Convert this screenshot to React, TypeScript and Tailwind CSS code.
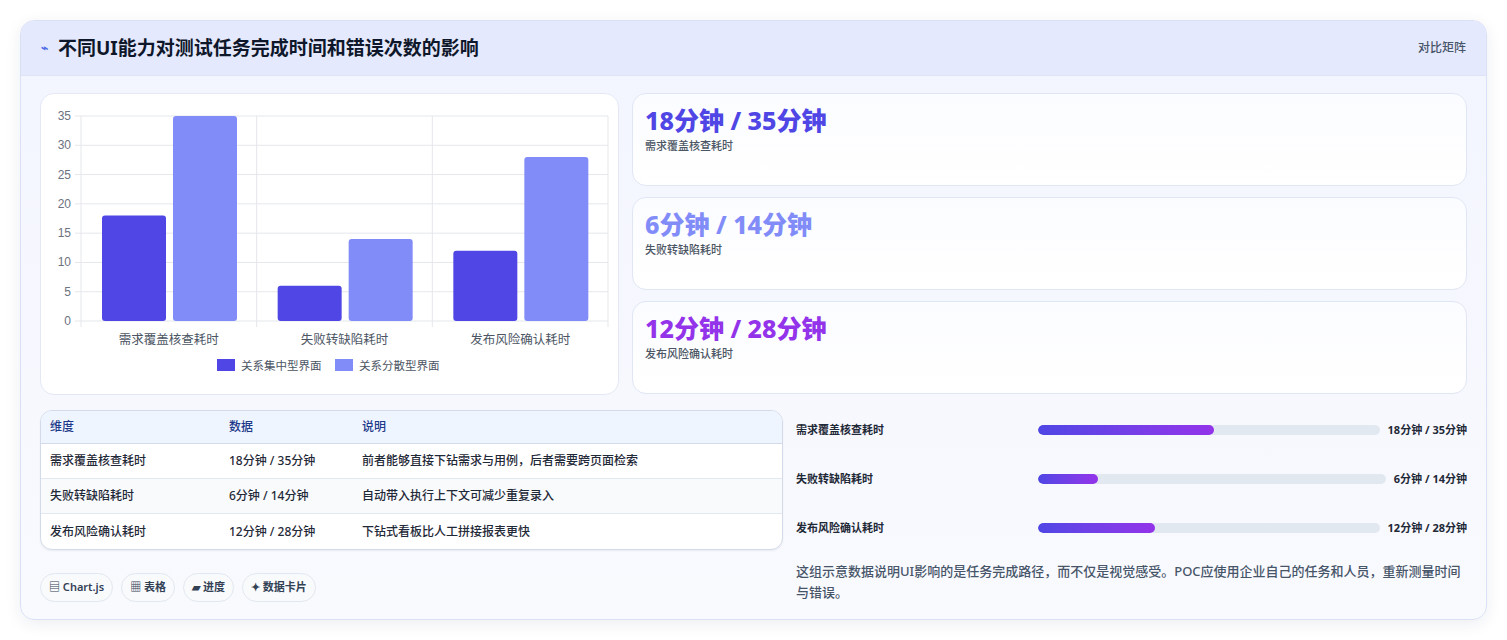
import React from "react";

const F = { fontFamily: '"Noto Sans", "Noto Sans CJK SC", sans-serif' };

function Chart() {
  const top = 22, bottom = 227, left = 40, right = 567;
  const s = (bottom - top) / 35;
  const gw = (right - left) / 3;
  const data = [[18, 35, "需求覆盖核查耗时"], [6, 14, "失败转缺陷耗时"], [12, 28, "发布风险确认耗时"]] as const;
  return (
    <svg width="578" height="300" className="block">
      {[0, 5, 10, 15, 20, 25, 30, 35].map((v) => (
        <g key={v}>
          <line x1={left - 6} x2={right} y1={bottom - v * s} y2={bottom - v * s} stroke="#e5e7eb" />
          <text x={30} y={bottom - v * s + 4} textAnchor="end" fontSize="12" fill="#6b7280" fontFamily="Liberation Sans, sans-serif">{v}</text>
        </g>
      ))}
      {[0, 1, 2, 3].map((i) => (
        <line key={i} x1={left + i * gw} x2={left + i * gw} y1={top} y2={bottom + 6} stroke="#e5e7eb" />
      ))}
      {data.map(([a, b, l], i) => {
        const x0 = left + i * gw + 21;
        return (
          <g key={i}>
            <rect x={x0} y={bottom - a * s} width={64} height={a * s} fill="#4f46e5" rx="3" />
            <rect x={x0 + 71} y={bottom - b * s} width={64} height={b * s} fill="#818cf8" rx="3" />
            <text x={left + i * gw + gw / 2} y={250} textAnchor="middle" fontSize="12.5" fill="#4b5563" fontFamily="Noto Sans CJK SC, sans-serif">{l}</text>
          </g>
        );
      })}
      <rect x={176} y={265} width={18} height={12} fill="#4f46e5" />
      <text x={200} y={276} fontSize="11.5" fill="#4b5563" fontFamily="Noto Sans CJK SC, sans-serif">关系集中型界面</text>
      <rect x={294} y={265} width={18} height={12} fill="#818cf8" />
      <text x={318} y={276} fontSize="11.5" fill="#4b5563" fontFamily="Noto Sans CJK SC, sans-serif">关系分散型界面</text>
    </svg>
  );
}

const rows = [
  ["需求覆盖核查耗时", "18分钟 / 35分钟", "前者能够直接下钻需求与用例，后者需要跨页面检索", 18],
  ["失败转缺陷耗时", "6分钟 / 14分钟", "自动带入执行上下文可减少重复录入", 6],
  ["发布风险确认耗时", "12分钟 / 28分钟", "下钻式看板比人工拼接报表更快", 12],
] as const;

export default function App() {
  return (
    <div style={F} className="w-[1507px] h-[640px] bg-white pt-[20px] px-[20px]">
      <div className="w-[1467px] h-[600px] rounded-[14px] border border-[#dbe1f5] bg-gradient-to-b from-[#f3f5ff] to-[#f9fafe] shadow-[0_4px_16px_rgba(30,41,90,0.08)] overflow-hidden">
        <div className="h-[55px] bg-[#e5e9fd] border-b border-[#dfe3f6] flex items-center justify-between px-[20px]">
          <div className="flex items-center gap-[10px]">
            <span className="text-[#4f6ee5] text-[12px] font-bold">⌁</span>
            <span className="text-[19px] font-bold text-[#0f172a]">不同UI能力对测试任务完成时间和错误次数的影响</span>
          </div>
          <span className="text-[12px] font-medium text-[#475569]">对比矩阵</span>
        </div>
        <div className="px-[19px] pt-[17px]">
          <div className="flex gap-[13px]">
            <div className="w-[579px] h-[302px] bg-white rounded-[14px] border border-[#e3e8f4]"><Chart /></div>
            <div className="flex-1 flex flex-col gap-[11px]">
              {[["18分钟 / 35分钟", "需求覆盖核查耗时", "text-[#4f46e5]"], ["6分钟 / 14分钟", "失败转缺陷耗时", "text-[#818cf8]"], ["12分钟 / 28分钟", "发布风险确认耗时", "text-[#9333ea]"]].map(([v, l, c]) => (
                <div key={l} className="h-[93px] rounded-[14px] border border-[#e0e6f4] bg-gradient-to-b from-[#fbfcff] to-white px-[12px] pt-[8px]">
                  <div className={`text-[25px] font-extrabold leading-[36px] ${c}`}>{v}</div>
                  <div className="text-[11px] font-medium text-[#4b5563]">{l}</div>
                </div>
              ))}
            </div>
          </div>
          <div className="flex gap-[13px] mt-[15px]">
            <div className="w-[743px]">
              <div className="rounded-[12px] border border-[#d3dbea] overflow-hidden bg-white shadow-[0_1px_2px_rgba(0,0,0,0.06)]">
                <div className="flex h-[33px] items-center bg-[#eff5ff] border-b border-[#d3dbea] text-[12px] font-medium text-[#1e3a8a] px-[9px]">
                  <div className="w-[179px]">维度</div><div className="w-[133px]">数据</div><div>说明</div>
                </div>
                {rows.map((r, i) => (
                  <div key={i} className={`flex h-[35px] items-center text-[12px] font-medium text-[#1f2937] px-[9px] ${i < 2 ? "border-b border-[#e2e8f0]" : ""} ${i === 1 ? "bg-[#f8fafc]" : ""}`}>
                    <div className="w-[179px]">{r[0]}</div><div className="w-[133px]">{r[1]}</div><div>{r[2]}</div>
                  </div>
                ))}
              </div>
              <div className="flex gap-[8px] mt-[23px] text-[11px] text-[#334155]">
                {["▤ Chart.js", "▦ 表格", "▰ 进度", "✦ 数据卡片"].map((t) => (
                  <span key={t} className="h-[29px] px-[8px] flex items-center rounded-full border border-[#e2e8f0] bg-[#f8fafc] font-semibold">{t}</span>
                ))}
              </div>
            </div>
            <div className="flex-1">
              {rows.map((r, i) => (
                <div key={i} className={`flex items-center h-[20px] ${i === 0 ? "mt-[10px]" : "mt-[29px]"} text-[11px] font-bold text-[#1f2937]`}>
                  <div className="w-[242px] shrink-0">{r[0]}</div>
                  <div className="flex-1 h-[10px] rounded-full bg-[#e2e8f0] overflow-hidden">
                    <div className="h-full rounded-full bg-gradient-to-r from-[#4f46e5] to-[#9333ea]" style={{ width: `${(r[3] / 35) * 100}%` }} />
                  </div>
                  <div className="ml-[8px] shrink-0">{r[1]}</div>
                </div>
              ))}
              <div className="mt-[23px] text-[13px] font-medium leading-[21px] text-[#475569]">这组示意数据说明UI影响的是任务完成路径，而不仅是视觉感受。POC应使用企业自己的任务和人员，重新测量时间与错误。</div>
            </div>
          </div>
        </div>
      </div>
    </div>
  );
}
